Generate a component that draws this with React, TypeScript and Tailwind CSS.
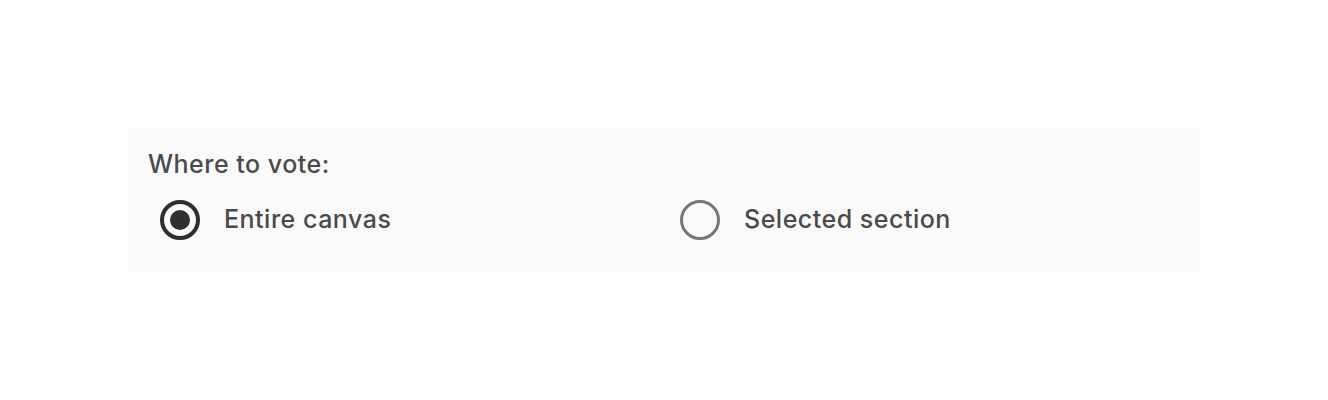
import React from "react";

export default function App() {
  return (
    <div className="w-[1328px] h-[400px] bg-white flex flex-col" style={{ fontFamily: "Inter, 'Liberation Sans', sans-serif" }}>
      <div className="mt-[128px] ml-[128px] w-[1072px] h-[144px] bg-[#fafafa] pl-5 pt-[21px] flex flex-col">
        <div className="text-[25px] leading-[30px] font-medium text-[#4a4a4a] tracking-[0.5px]">Where to vote:</div>
        <div className="flex mt-[21px] pl-3">
          <label className="w-[520px] flex items-center h-[40px]">
            <span className="w-[40px] h-[40px] rounded-full border-[4px] border-[#2e2e2e] flex items-center justify-center">
              <span className="w-[20px] h-[20px] rounded-full bg-[#2e2e2e]" />
            </span>
            <span className="ml-[24px] text-[25px] font-medium text-[#4a4a4a] tracking-[0.5px]">Entire canvas</span>
          </label>
          <label className="flex items-center h-[40px]">
            <span className="w-[40px] h-[40px] rounded-full border-[3px] border-[#777777]" />
            <span className="ml-[24px] text-[25px] font-medium text-[#4a4a4a] tracking-[0.5px]">Selected section</span>
          </label>
        </div>
      </div>
    </div>
  );
}
